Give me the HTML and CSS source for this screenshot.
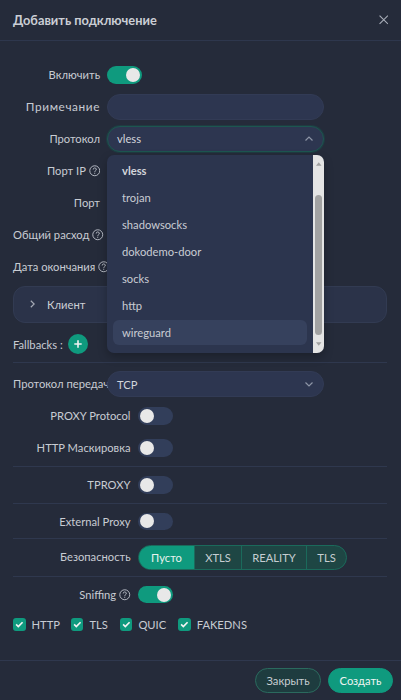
FILE: index.html
```html
<!DOCTYPE html>
<html lang="ru">
<head>
<meta charset="utf-8">
<title>Добавить подключение</title>
<link rel="stylesheet" href="styles.css">
</head>
<body>
<div class="modal">
  <header class="m-head">
    <div class="m-title">Добавить подключение</div>
    <svg class="m-close" viewBox="0 0 10 10"><path d="M0.6 0.6L9.4 9.4M9.4 0.6L0.6 9.4"/></svg>
  </header>

  <main class="m-body">
    <div class="row">
      <div class="lbl">Включить</div>
      <div class="ctl"><span class="sw on"></span></div>
    </div>
    <div class="row">
      <div class="lbl wide">Примечание</div>
      <div class="ctl"><div class="inp"></div></div>
    </div>
    <div class="row">
      <div class="lbl">Протокол</div>
      <div class="ctl">
        <div class="inp sel focus">
          <span class="val">vless</span>
          <svg class="chev" viewBox="0 0 8 5"><path d="M0.5 4.5L4 1L7.5 4.5"/></svg>
        </div>
        <div class="dropdown">
          <ul class="opts">
            <li class="opt chosen">vless</li>
            <li class="opt">trojan</li>
            <li class="opt">shadowsocks</li>
            <li class="opt">dokodemo-door</li>
            <li class="opt">socks</li>
            <li class="opt">http</li>
            <li class="opt hover">wireguard</li>
          </ul>
          <div class="sbar">
            <svg class="sb-arrow up" viewBox="0 0 6 4"><path d="M3 0L6 4H0z"/></svg>
            <div class="sb-thumb"></div>
            <svg class="sb-arrow down" viewBox="0 0 6 4"><path d="M0 0H6L3 4z"/></svg>
          </div>
        </div>
      </div>
    </div>
    <div class="row">
      <div class="lbl">Порт IP <svg class="help" viewBox="0 0 12 12"><circle cx="6" cy="6" r="5.2"/><path d="M4.4 4.7a1.6 1.6 0 1 1 2.3 1.4c-.5.3-.7.6-.7 1.1v.4"/><circle class="dot" cx="6" cy="8.9" r=".55"/></svg></div>
      <div class="ctl"><div class="inp"></div></div>
    </div>
    <div class="row">
      <div class="lbl">Порт</div>
      <div class="ctl"><div class="inp"></div></div>
    </div>
    <div class="row">
      <div class="lbl">Общий расход <svg class="help" viewBox="0 0 12 12"><circle cx="6" cy="6" r="5.2"/><path d="M4.4 4.7a1.6 1.6 0 1 1 2.3 1.4c-.5.3-.7.6-.7 1.1v.4"/><circle class="dot" cx="6" cy="8.9" r=".55"/></svg></div>
      <div class="ctl"><div class="inp"></div></div>
    </div>
    <div class="row">
      <div class="lbl">Дата окончания <svg class="help" viewBox="0 0 12 12"><circle cx="6" cy="6" r="5.2"/><path d="M4.4 4.7a1.6 1.6 0 1 1 2.3 1.4c-.5.3-.7.6-.7 1.1v.4"/><circle class="dot" cx="6" cy="8.9" r=".55"/></svg></div>
      <div class="ctl"><div class="inp"></div></div>
    </div>

    <div class="coll">
      <svg class="coll-chev" viewBox="0 0 5 8"><path d="M0.8 0.8L4.2 4L0.8 7.2"/></svg>
      <span>Клиент</span>
    </div>

    <div class="fb-row">
      <span>Fallbacks</span><span class="colon">:</span>
      <span class="plus"><svg viewBox="0 0 20 20"><path d="M10 6.3v7.4M6.3 10h7.4"/></svg></span>
    </div>

    <div class="divider d1"></div>

    <div class="row">
      <div class="lbl">Протокол передачи</div>
      <div class="ctl">
        <div class="inp sel">
          <span class="val">TCP</span>
          <svg class="chev" viewBox="0 0 8 5"><path d="M0.5 0.5L4 4L7.5 0.5"/></svg>
        </div>
      </div>
    </div>

    <div class="row w8">
      <div class="lbl">PROXY Protocol</div>
      <div class="ctl"><span class="sw"></span></div>
    </div>
    <div class="row w8 last">
      <div class="lbl">HTTP Маскировка</div>
      <div class="ctl"><span class="sw"></span></div>
    </div>

    <div class="divider d2"></div>
    <div class="row w8 last">
      <div class="lbl">TPROXY</div>
      <div class="ctl"><span class="sw"></span></div>
    </div>

    <div class="divider d3"></div>
    <div class="row w8 last">
      <div class="lbl">External Proxy</div>
      <div class="ctl"><span class="sw"></span></div>
    </div>

    <div class="divider d4"></div>
    <div class="row w8 last">
      <div class="lbl">Безопасность</div>
      <div class="ctl">
        <div class="seg">
          <span class="seg-i s1 active">Пусто</span>
          <span class="seg-i s2">XTLS</span>
          <span class="seg-i s3">REALITY</span>
          <span class="seg-i s4">TLS</span>
        </div>
      </div>
    </div>

    <div class="divider d5"></div>
    <div class="row w8 last">
      <div class="lbl">Sniffing <svg class="help" viewBox="0 0 12 12"><circle cx="6" cy="6" r="5.2"/><path d="M4.4 4.7a1.6 1.6 0 1 1 2.3 1.4c-.5.3-.7.6-.7 1.1v.4"/><circle class="dot" cx="6" cy="8.9" r=".55"/></svg></div>
      <div class="ctl"><span class="sw on"></span></div>
    </div>

    <div class="checks">
      <label class="cb first"><span class="box"><svg viewBox="0 0 12 12"><path d="M3 6.2l2.1 2.1L9.2 4.1"/></svg></span>HTTP</label>
      <label class="cb"><span class="box"><svg viewBox="0 0 12 12"><path d="M3 6.2l2.1 2.1L9.2 4.1"/></svg></span>TLS</label>
      <label class="cb"><span class="box"><svg viewBox="0 0 12 12"><path d="M3 6.2l2.1 2.1L9.2 4.1"/></svg></span>QUIC</label>
      <label class="cb"><span class="box"><svg viewBox="0 0 12 12"><path d="M3 6.2l2.1 2.1L9.2 4.1"/></svg></span>FAKEDNS</label>
    </div>
  </main>

  <footer class="m-foot">
    <button class="btn ghost">Закрыть</button>
    <button class="btn primary">Создать</button>
  </footer>
</div>
</body>
</html>
```

FILE: styles.css
```css
* { box-sizing: border-box; }
html, body { margin: 0; padding: 0; }
body {
  width: 401px;
  height: 700px;
  overflow: hidden;
  background: #252b3a;
  font-family: Lato, "Noto Sans", sans-serif;
  font-size: 11.2px;
  color: #c8ccd3;
}
.modal { height: 700px; display: flex; flex-direction: column; }

.m-head {
  flex: none;
  height: 41px;
  display: flex;
  align-items: center;
  justify-content: space-between;
  padding: 0 13px 0 13px;
  border-bottom: 1px solid #2e374d;
}
.m-title { font-size: 12.8px; font-weight: 700; color: #cbced5; }
.m-close { width: 9.5px; height: 9.5px; fill: none; stroke: #a8adb8; stroke-width: 1.2; }

.m-body { flex: 1; padding: 21px 14px 0 13px; }

.row { display: flex; align-items: center; height: 25.6px; margin-bottom: 6.4px; }
.row.last { margin-bottom: 0; }
.lbl {
  flex: 0 0 94px;
  min-width: 0;
  padding-right: 7px;
  text-align: right;
  white-space: nowrap;
  line-height: 25.6px;
}
.lbl.wide { letter-spacing: 0.6px; font-size: 11.8px; }
.ctl { position: relative; flex: 0 0 217px; height: 25.6px; display: flex; align-items: center; }
.row.w8 .lbl { flex-basis: 125px; padding-right: 7.5px; }

.help { width: 11.5px; height: 11.5px; vertical-align: -2px; fill: none; stroke: #b7bbc4; stroke-width: 1; }
.help .dot { fill: #b7bbc4; stroke: none; }

.inp {
  width: 100%;
  height: 25.6px;
  border-radius: 13px;
  background: #2d3650;
  border: 1px solid #323b55;
}
.sel { display: flex; align-items: center; justify-content: space-between; padding: 0 10px 0 9px; }
.sel .val { color: #d2d5db; }
.sel.focus { border-color: #1d5650; box-shadow: 0 0 0 1px rgba(20, 90, 80, 0.35); }
.chev { width: 8px; height: 5px; fill: none; stroke: #8d95a6; stroke-width: 1.2; }

.dropdown {
  position: absolute;
  z-index: 10;
  top: calc(100% + 3px);
  left: 0;
  width: 217px;
  height: 198px;
  border-radius: 7px;
  background: #2c354e;
  overflow: hidden;
  box-shadow: 0 4px 10px rgba(0, 0, 0, 0.25);
}
.opts { list-style: none; margin: 0; padding: 3px 17px 0 6px; }
.opt {
  height: 25px;
  margin-bottom: 2px;
  padding-left: 9px;
  line-height: 25px;
  border-radius: 6px;
  color: #c9ccd3;
}
.opt.chosen { font-weight: 700; color: #d3d6dc; }
.opt.hover { background: #36415d; }

.sbar {
  position: absolute;
  top: 0;
  right: 0;
  width: 11px;
  height: 100%;
  background: #e4e4e4;
}
.sb-arrow { position: absolute; left: 3px; width: 5.5px; height: 4px; fill: #a0a0a0; }
.sb-arrow.up { top: 7px; }
.sb-arrow.down { bottom: 7px; }
.sb-thumb {
  position: absolute;
  left: 2px;
  top: 40px;
  width: 7px;
  height: 140px;
  border-radius: 4px;
  background: #a2a2a2;
}

.sw {
  position: relative;
  display: inline-block;
  width: 35px;
  height: 17.6px;
  border-radius: 9px;
  background: #323e5a;
}
.sw::after {
  content: "";
  position: absolute;
  top: 1.8px;
  left: 2px;
  width: 14px;
  height: 14px;
  border-radius: 50%;
  background: #e8e8e8;
}
.sw.on { background: #0f9a7e; }
.sw.on::after { left: auto; right: 2px; }

.coll {
  height: 37px;
  display: flex;
  align-items: center;
  gap: 12px;
  padding-left: 16px;
  border-radius: 12px;
  background: #2b3349;
  border: 1px solid #323b52;
  color: #cdd0d6;
}
.coll-chev { width: 5px; height: 8px; fill: none; stroke: #a6abb6; stroke-width: 1.2; }

.fb-row { display: flex; align-items: center; height: 25.6px; margin-top: 8.7px; }
.colon { margin-left: 3px; }
.plus {
  margin-left: 5px;
  width: 20px;
  height: 20px;
  border-radius: 50%;
  background: #0f9a7e;
  display: flex;
}
.plus svg { width: 20px; height: 20px; fill: none; stroke: #f2f2f2; stroke-width: 1.6; }

.divider { height: 1px; background: #2f384e; }
.d1 { margin: 4.5px 0 8.7px; }
.d2 { margin: 5.4px 0 4.6px; }
.d3 { margin: 5px 0 5px; }
.d4 { margin: 3.6px 0 5.7px; }
.d5 { margin: 6.4px 0 4.5px; }

.seg {
  display: flex;
  flex: none;
  height: 25px;
  border: 1px solid #1b6a5b;
  border-radius: 13px;
  overflow: hidden;
  background: #1e4644;
}
.seg-i {
  display: flex;
  flex: none;
  align-items: center;
  justify-content: center;
  color: #c6ced2;
  border-left: 1px solid #1b6a5b;
}
.seg-i.s1 { width: 55px; border-left: none; }
.seg-i.s2 { width: 47px; }
.seg-i.s3 { width: 65px; }
.seg-i.s4 { width: 40px; }
.seg-i.active { background: #0f9a7e; color: #e9f2ef; }

.checks { display: flex; align-items: center; height: 16px; margin-top: 9.2px; }
.cb { display: inline-flex; align-items: center; gap: 6px; margin-right: 12px; }
.cb.first { margin-right: 11px; }
.box {
  width: 12.5px;
  height: 12.5px;
  border-radius: 3px;
  background: #0f9a7e;
  display: flex;
}
.box svg { width: 12.5px; height: 12.5px; fill: none; stroke: #f4f4f4; stroke-width: 1.6; }

.m-foot {
  flex: none;
  height: 40px;
  border-top: 1px solid #2f384e;
  display: flex;
  justify-content: flex-end;
  align-items: center;
  gap: 7px;
  padding: 0 8px 0 0;
}
.btn {
  height: 25px;
  border-radius: 13px;
  font-family: inherit;
  font-size: 11.2px;
  padding: 0;
}
.btn.ghost { width: 66px; background: #1e3c3f; border: 1px solid #2b6a5e; color: #c7ced1; }
.btn.primary { width: 65px; background: #0f9a7e; border: 1px solid #0f9a7e; color: #eef4f2; }
```
